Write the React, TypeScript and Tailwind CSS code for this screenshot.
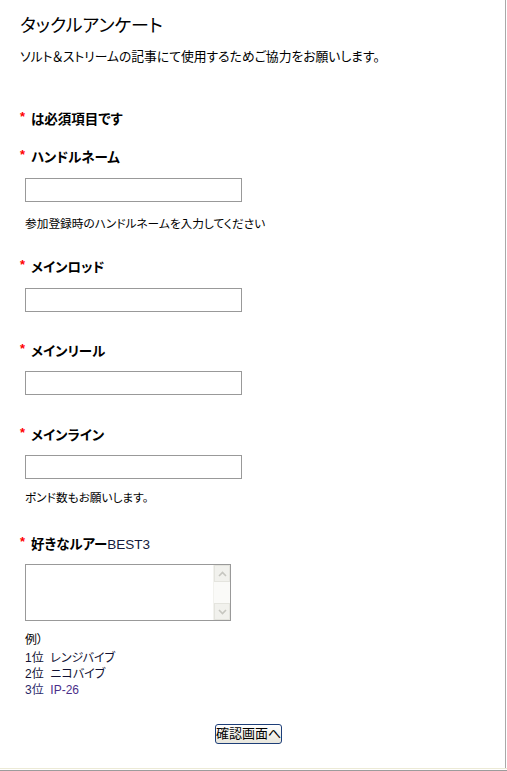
import React from "react";

const font = "font-['Liberation_Sans','Noto_Sans_CJK_JP',sans-serif] [font-feature-settings:'palt']";

function Label({ text, extra }: { text: string; extra?: string }) {
  return (
    <div className="flex h-[18px] items-center pl-[20px]">
      <span className="mr-[2px] -mt-[8px] w-[9px] text-[13px] font-bold leading-none text-[#ff0000]">*</span>
      <span className="text-[13.5px] font-bold text-black">{text}</span>
      {extra && <span className="text-[13.5px] text-[#141a3c]">{extra}</span>}
    </div>
  );
}

function TextInput({ className = "" }: { className?: string }) {
  return (
    <div className={`ml-[25px] ${className}`}>
      <input type="text" className="block h-[24px] w-[217px] border border-[#999999] bg-white px-1 text-[13px] outline-none" />
    </div>
  );
}

function Help({ children, className = "" }: { children: React.ReactNode; className?: string }) {
  return <div className={`h-[18px] pl-[25px] text-[11.7px] leading-[18px] text-black ${className}`}>{children}</div>;
}

export default function App() {
  return (
    <div className={`flex h-[771px] w-[507px] flex-col bg-white ${font}`}>
      <div className="h-[768px] w-[506px] border-r border-[#a9a9a9] bg-white">
        {/* header */}
        <div className="mt-[12px] h-[28px] pl-[20px] text-[18px] leading-[28px] text-black">タックルアンケート</div>
        <div className="mt-[8px] h-[18px] pl-[20px] text-[12.8px] leading-[18px] text-black">
          ソルト＆ストリームの記事にて使用するためご協力をお願いします。
        </div>

        <div className="mt-[45px]">
          <Label text="は必須項目です" />
        </div>

        <div className="mt-[20px]">
          <Label text="ハンドルネーム" />
        </div>
        <TextInput className="mt-[11px]" />
        <Help className="mt-[13px]">参加登録時のハンドルネームを入力してください</Help>

        <div className="mt-[26px]">
          <Label text="メインロッド" />
        </div>
        <TextInput className="mt-[11px]" />

        <div className="mt-[31px]">
          <Label text="メインリール" />
        </div>
        <TextInput className="mt-[10px]" />

        <div className="mt-[32px]">
          <Label text="メインライン" />
        </div>
        <TextInput className="mt-[10px]" />
        <Help className="mt-[10px]">ポンド数もお願いします。</Help>

        <div className="mt-[29px]">
          <Label text="好きなルアー" extra="BEST3" />
        </div>

        {/* textarea with classic scrollbar */}
        <div className="ml-[25px] mt-[10px] flex h-[57px] w-[206px] border border-[#999999] bg-white">
          <textarea className="h-full flex-1 resize-none overflow-hidden bg-white outline-none" />
          <div className="flex w-[17px] flex-col justify-between border-l border-[#f2f2ee] bg-[#fafaf8]">
            <div className="flex h-[17px] items-center justify-center border border-[#e4e4de] bg-[#f1f1ed]">
              <svg width="9" height="6" viewBox="0 0 9 6">
                <path d="M1 5 L4.5 1.5 L8 5" fill="none" stroke="#c6c6c0" strokeWidth="1.6" />
              </svg>
            </div>
            <div className="flex h-[17px] items-center justify-center border border-[#e4e4de] bg-[#f1f1ed]">
              <svg width="9" height="6" viewBox="0 0 9 6">
                <path d="M1 1 L4.5 4.5 L8 1" fill="none" stroke="#c6c6c0" strokeWidth="1.6" />
              </svg>
            </div>
          </div>
        </div>

        <div className="mt-[11px] h-[16px] pl-[25px] text-[12px] leading-[16px] text-black">例）</div>
        <div className="mt-[2px] pl-[25px] text-[12px] leading-[16px]">
          <div className="text-[#111133]">1位&nbsp;&nbsp;レンジバイブ</div>
          <div className="text-[#111133]">2位&nbsp;&nbsp;ニコバイブ</div>
          <div className="text-[#2a2a6a]">
            3位&nbsp;&nbsp;<span className="text-[#4a2f8a]">IP-26</span>
          </div>
        </div>

        <div className="mt-[26px] flex pl-[215px]">
          <button className="h-[20px] rounded-[3px] border border-[#1d3e78] bg-gradient-to-b from-white to-[#e8e6dc] px-0 text-[13px] leading-[18px] text-black">
            確認画面へ
          </button>
        </div>
      </div>
      <div className="h-[1px] w-full bg-[#ecead6]" />
      <div className="h-[1px] w-full bg-white" />
      <div className="h-[1px] w-full bg-[#9c9c9c]" />
    </div>
  );
}
